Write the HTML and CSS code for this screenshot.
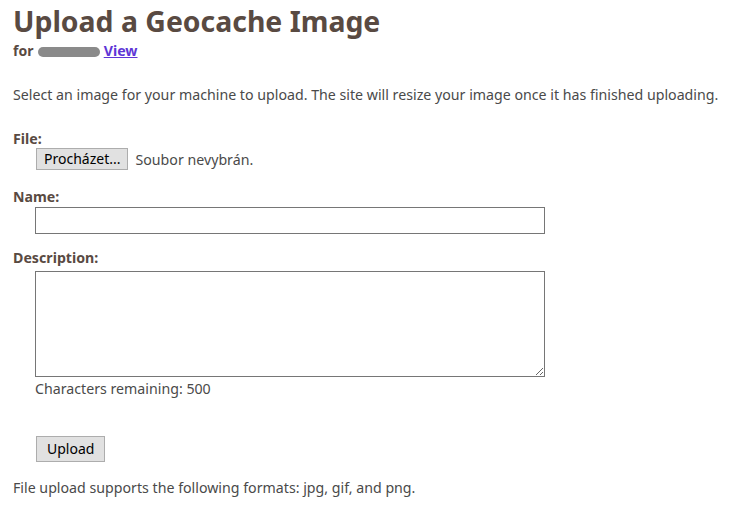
FILE: index.html
```html
<!DOCTYPE html>
<html lang="en">
<head>
    <meta charset="UTF-8">
    <meta name="viewport" content="width=device-width, initial-scale=1.0">
    <title>Upload a Geocache Image</title>
    <link rel="stylesheet" href="styles.css">
</head>
<body>
    <div class="container">
        <h1>Upload a Geocache Image</h1>
        <p class="for-line">for <span class="redacted"></span> <a href="#">View</a></p>
        <p class="intro">Select an image for your machine to upload. The site will resize your image once it has finished uploading.</p>
        <form class="upload-form">
            <label class="file-label">File:</label>
            <div class="file-row">
                <button type="button" class="btn btn-browse">Procházet...</button>
                <span class="file-status">Soubor nevybrán.</span>
            </div>

            <label for="name" class="name-label">Name:</label>
            <input type="text" id="name" class="text-input">

            <label for="desc" class="desc-label">Description:</label>
            <textarea id="desc" class="text-area"></textarea>
            <div class="remaining">Characters remaining: 500</div>

            <div class="submit-row">
                <button type="button" class="btn btn-upload">Upload</button>
            </div>
        </form>
        <p class="formats">File upload supports the following formats: jpg, gif, and png.</p>
    </div>
</body>
</html>
```

FILE: styles.css
```css
body {
    font-family: "Noto Sans", sans-serif;
    color: #4a4a4a;
    background: #fff;
    margin: 0;
    padding: 0;
}

.container {
    padding: 0 0 0 13px;
}

h1 {
    font-size: 28.4px;
    font-weight: bold;
    color: #594a42;
    margin: 0;
    padding-top: 2px;
    line-height: 38px;
}

.for-line {
    font-size: 14px;
    font-weight: bold;
    color: #594a42;
    margin: 2px 0 0;
    line-height: 18px;
}

.redacted {
    display: inline-block;
    width: 62px;
    height: 10px;
    background: #8a8a8a;
    border-radius: 5px;
    vertical-align: -1px;
    margin-left: 1px;
    margin-right: 0;
}

.for-line a {
    font-size: 14.2px;
    color: #5e36d6;
    text-decoration: underline;
}

.intro {
    font-size: 14.2px;
    margin: 25px 0 0;
    line-height: 20px;
    white-space: nowrap;
}

.upload-form {
    margin-top: 25px;
}

label {
    display: block;
    font-size: 14.2px;
    font-weight: bold;
    color: #594a42;
    line-height: 18px;
}

.name-label {
    margin-top: 18px;
}

.desc-label {
    margin-top: 15px;
}

.file-row {
    display: flex;
    align-items: center;
    gap: 7px;
    padding-left: 23px;
}

.btn {
    font-family: "Noto Sans", sans-serif;
    font-size: 14px;
    color: #000;
    background: #e1e1e1;
    border: 1px solid #adadad;
    border-radius: 0;
    padding: 0 9px;
    height: 22px;
    line-height: 20px;
}

.btn-browse {
    padding: 0 7px;
}

.file-status {
    font-size: 14.2px;
}

.text-input {
    display: block;
    margin: 1px 0 0 22px;
    width: 510px;
    height: 27px;
    box-sizing: border-box;
    border: 1px solid #767676;
    border-radius: 0;
    padding: 2px 4px;
}

.text-area {
    display: block;
    margin: 4px 0 0 22px;
    width: 510px;
    height: 106px;
    box-sizing: border-box;
    border: 1px solid #767676;
    border-radius: 0;
    padding: 2px 4px;
}

.remaining {
    font-size: 14.2px;
    padding-left: 22px;
    margin-top: 2px;
    line-height: 20px;
}

.submit-row {
    padding-left: 23px;
    margin-top: 37px;
}

.btn-upload {
    height: 26px;
    padding: 0 10px;
}

.formats {
    font-size: 14.2px;
    margin: 16px 0 0;
    line-height: 20px;
}
```
